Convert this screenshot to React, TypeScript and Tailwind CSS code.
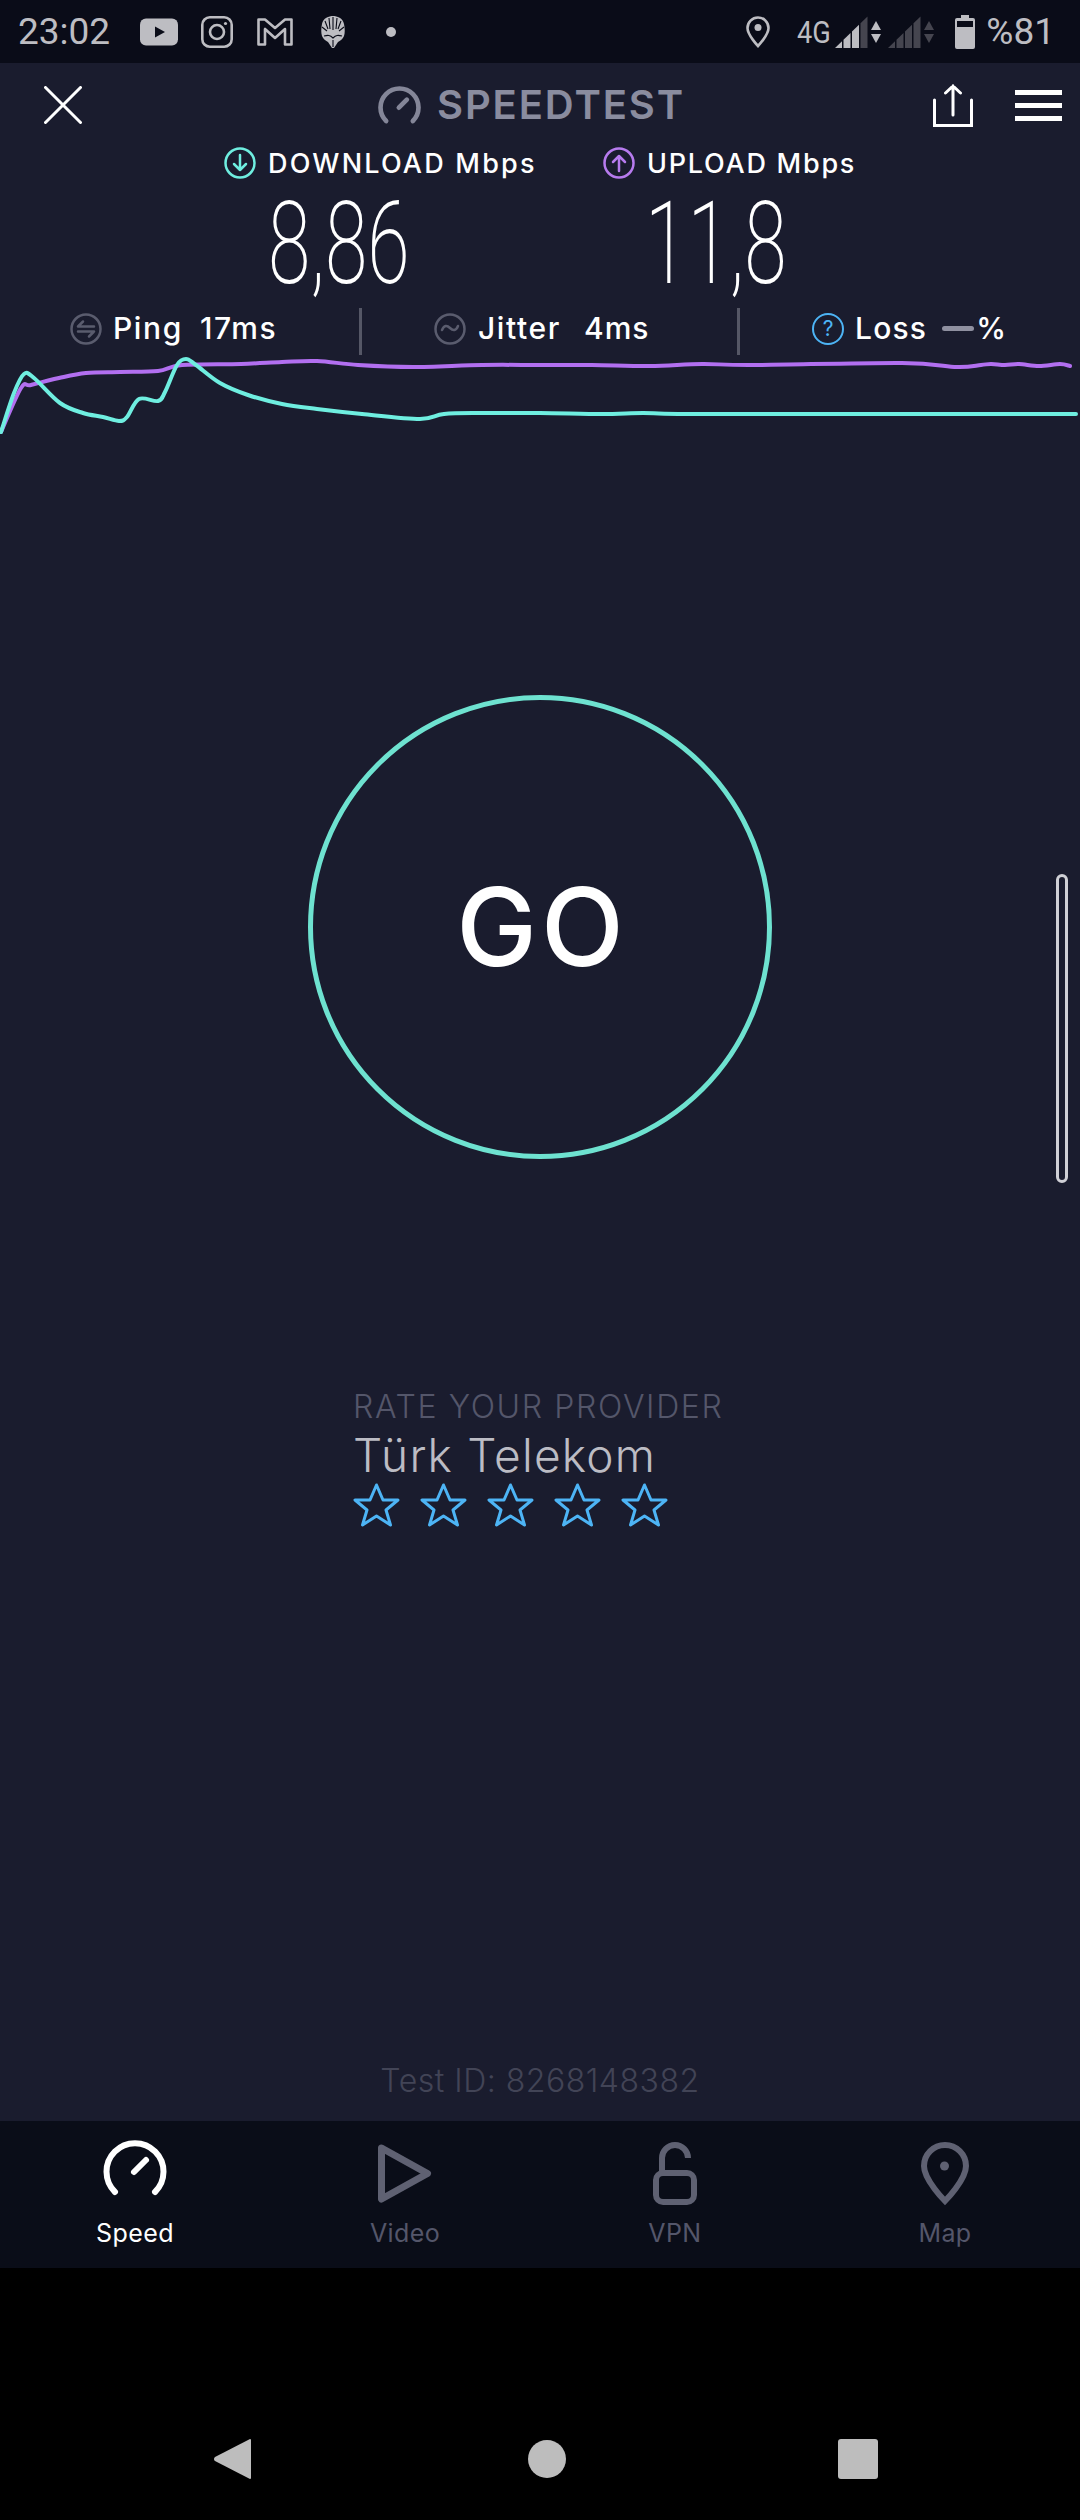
const cyanPoints = [
  [1, 432], [14, 393], [24, 374], [34, 378], [60, 403], [83, 413], [103, 417], [119, 421], [127, 417], [139, 399],
  [158, 401], [165, 392], [177, 365], [186, 359], [196, 365], [220, 383], [248, 395], [282, 404], [317, 409],
  [362, 414], [420, 419], [444, 414], [482, 413], [540, 413], [602, 414], [643, 413], [678, 414], [800, 414], [1076, 414],
];

const purplePoints = [
  [1, 432], [21, 388], [31, 385], [59, 378], [86, 373], [120, 372], [158, 371], [182, 365], [241, 364], [282, 362],
  [317, 361], [358, 365], [413, 367], [482, 365], [540, 365], [592, 365], [650, 366], [702, 364], [753, 365],
  [902, 363], [957, 367], [981, 365], [991, 364], [1005, 365], [1019, 364], [1039, 366], [1060, 364], [1070, 366],
];

// catmull-rom through the sampled points
function smoothPath(pts: number[][]) {
  let d = `M${pts[0][0]} ${pts[0][1]}`;
  for (let i = 0; i < pts.length - 1; i++) {
    const p0 = pts[i - 1] || pts[i];
    const p1 = pts[i];
    const p2 = pts[i + 1];
    const p3 = pts[i + 2] || p2;
    const c1x = p1[0] + (p2[0] - p0[0]) / 6;
    const c1y = p1[1] + (p2[1] - p0[1]) / 6;
    const c2x = p2[0] - (p3[0] - p1[0]) / 6;
    const c2y = p2[1] - (p3[1] - p1[1]) / 6;
    d += ` C${c1x} ${c1y} ${c2x} ${c2y} ${p2[0]} ${p2[1]}`;
  }
  return d;
}

function SignalBars({ lit }: { lit: number }) {
  return (
    <svg width="33" height="32" viewBox="0 0 33 32">
      {[0, 1, 2, 3].map((i) => {
        const x0 = i * 8.5;
        const x1 = x0 + 7;
        return (
          <polygon
            key={i}
            points={`${x0},32 ${x1},32 ${x1},${32 - (x1 * 32) / 33} ${x0},${32 - (x0 * 32) / 33}`}
            fill={i < lit ? "#bdbdc2" : "#45454f"}
          />
        );
      })}
    </svg>
  );
}

function DataArrows({ color }: { color: string }) {
  return (
    <svg width="10" height="22" viewBox="0 0 10 22" fill={color}>
      <polygon points="5,0 10,9 0,9" />
      <polygon points="0,13 10,13 5,22" />
    </svg>
  );
}

function StatusBar() {
  return (
    <div className="h-[63px] bg-[#0a0c18] flex items-center pl-[18px] pr-[25px] text-[#bdbdc2] font-['Roboto',sans-serif] text-[37px] leading-none">
      <span className="w-[122px]">23:02</span>
      <svg width="38" height="28" viewBox="0 0 38 28">
        <rect width="38" height="27" y="0.5" rx="6" fill="#bdbdc2" />
        <polygon points="15,8.5 25,14 15,19.5" fill="#0a0c18" />
      </svg>
      <svg className="ml-[23px]" width="32" height="32" viewBox="0 0 32 32" fill="none" stroke="#bdbdc2" strokeWidth="2.6">
        <rect x="1.3" y="1.3" width="29.4" height="29.4" rx="7.5" />
        <circle cx="16" cy="16" r="7" />
        <circle cx="24.5" cy="7.5" r="1.6" fill="#bdbdc2" stroke="none" />
      </svg>
      <svg className="ml-[24px]" width="36" height="28" viewBox="0 0 36 28" fill="none" stroke="#bdbdc2" strokeWidth="2.6" strokeLinejoin="round">
        <path d="M1.5 1.5H8L18 10 28 1.5h6.5v25H28V11L18 20 8 11v15.500H1.5Z" />
      </svg>
      <svg className="ml-[28px]" width="24" height="32" viewBox="0 0 24 32">
        <path d="M12 0C16 0 22 2 23 8c1 5 1 9 0 12-1 3-4 5-6 6l-4 6h-2l-4-6c-2-1-5-3-6-6C0 17 0 13 1 8 2 2 8 0 12 0Z" fill="#bdbdc2" />
        <path d="M12 1v13M8 2l1 11M16 2l-1 11M4 5l3 8M20 5l-3 8M1 11l5 4M23 11l-5 4M3 20c4-1 6-1 9 2 3-3 5-3 9-2M12 24v7" stroke="#0a0c18" strokeWidth="1.1" fill="none" />
      </svg>
      <span className="ml-[41px] w-[10px] h-[10px] rounded-full bg-[#bdbdc2]" />
      <svg className="ml-auto" width="24" height="32" viewBox="0 0 24 32" fill="none" stroke="#bdbdc2" strokeWidth="2.6">
        <path d="M12 30C12 30 1.500 19 1.500 12a10.500 10.500 0 0 1 21 0C22.500 19 12 30 12 30Z" />
        <circle cx="12" cy="11.5" r="3.5" fill="#bdbdc2" stroke="none" />
      </svg>
      <span className="ml-[27px] w-[38px] text-[32px] origin-left scale-x-[0.85] inline-block">4G</span>
      <SignalBars lit={3} />
      <span className="ml-[3px]"><DataArrows color="#bdbdc2" /></span>
      <span className="ml-[7px]"><SignalBars lit={0} /></span>
      <span className="ml-[3px]"><DataArrows color="#45454f" /></span>
      <svg className="ml-[21px]" width="20" height="34" viewBox="0 0 20 34">
        <path d="M6 0h8v3h4a2 2 0 0 1 2 2v27a2 2 0 0 1-2 2H2a2 2 0 0 1-2-2V5a2 2 0 0 1 2-2h4Z" fill="#bdbdc2" />
        <rect x="2" y="6" width="16" height="6" fill="#0a0c18" />
      </svg>
      <span className="ml-[11px]">%81</span>
    </div>
  );
}

function GaugeIcon({ color, stroke, className }: { color: string; stroke: number; className?: string }) {
  return (
    <svg className={className} width="70" height="60" viewBox="0 0 70 60" fill="none" stroke={color} strokeWidth={stroke} strokeLinecap="round">
      <path d="M15 54A28.5 28.5 0 1 1 55 54" />
      <path d="M34 34L46 22" />
    </svg>
  );
}

function MetricHeader({ color, up, label, tracking }: { color: string; up?: boolean; label: string; tracking: string }) {
  return (
    <div className="flex items-center h-[32px]">
      <svg width="32" height="32" viewBox="0 0 32 32" fill="none" stroke={color} strokeWidth="2.5" strokeLinecap="round" strokeLinejoin="round">
        <circle cx="16" cy="16" r="14.5" />
        {up ? <path d="M16 24V9M10 15l6-6 6 6" /> : <path d="M16 8v15M10 17l6 6 6-6" />}
      </svg>
      <span className={`ml-[12px] pt-[2px] text-[27px] font-medium text-white whitespace-nowrap ${tracking}`}>{label}</span>
    </div>
  );
}

function Stars() {
  return (
    <div className="flex gap-[20px] mt-[3px]">
      {[0, 1, 2, 3, 4].map((i) => (
        <svg key={i} width="47" height="44" viewBox="0 0 47 44" fill="none" stroke="#4db4f5" strokeWidth="3" strokeLinejoin="round">
          <polygon points="23.5,2 30,17 45,17 33,27 37.5,42 23.5,33 9.5,42 14,27 2,17 17,17" />
        </svg>
      ))}
    </div>
  );
}

function Chart() {
  return (
    <svg className="block w-[1080px] h-[85px]" viewBox="0 355 1080 85" fill="none" strokeWidth="4" strokeLinejoin="round" strokeLinecap="round">
      <path d={smoothPath(purplePoints)} stroke="#b26ff0" />
      <path d={smoothPath(cyanPoints)} stroke="#6feee0" />
    </svg>
  );
}

function NavItem({ label, active, children }: { label: string; active?: boolean; children: React.ReactNode }) {
  return (
    <div className="flex flex-col items-center">
      <div className="h-[68px] flex items-start justify-center">{children}</div>
      <span className={`mt-[12px] text-[25px] leading-[30px] tracking-[0.4px] ${active ? "text-white" : "text-[#54566a]"}`}>{label}</span>
    </div>
  );
}

export default function App() {
  return (
    <div className="w-[1080px] h-[2520px] flex flex-col bg-black font-['Inter',sans-serif] overflow-hidden">
      <StatusBar />

      <div className="relative h-[2058px] bg-[#1a1c2e] flex flex-col">
        {/* top bar */}
        <div className="h-[84px] flex items-center pl-[44px] pr-[18px]">
          <svg width="38" height="38" viewBox="0 0 38 38" stroke="white" strokeWidth="3" strokeLinecap="round">
            <path d="M1.5 1.5l35 35M36.5 1.5l-35 35" />
          </svg>
          <div className="ml-[294px] flex items-center">
            <GaugeIcon color="#848698" stroke={7} className="w-[47px] h-[40px]" />
            <span className="ml-[14px] text-[40px] font-semibold text-[#8a8c9f] tracking-[1.9px]">SPEEDTEST</span>
          </div>
          <svg className="ml-auto" width="40" height="43" viewBox="0 0 40 43" fill="none" stroke="white" strokeWidth="3" strokeLinecap="round">
            <path d="M1.5 16v25.500h37V16M20 31V2M12.500 9L20 2l7.500 7" />
          </svg>
          <div className="ml-[42px] w-[47px] flex flex-col gap-[8px]">
            <div className="h-[5px] bg-white" />
            <div className="h-[5px] bg-white" />
            <div className="h-[5px] bg-white" />
          </div>
        </div>

        {/* download / upload */}
        <div className="flex pl-[224px]">
          <div className="w-[379px]">
            <MetricHeader color="#6feee0" label="DOWNLOAD Mbps" tracking="tracking-[2.2px]" />
            <div className="h-[129px] flex items-center pl-[44px]">
              <span className="inline-block origin-left scale-x-[0.67] text-[115px] font-extralight text-white leading-none font-['Roboto',sans-serif]">8,86</span>
            </div>
          </div>
          <div>
            <MetricHeader color="#b77bee" up label="UPLOAD Mbps" tracking="tracking-[1.75px]" />
            <div className="h-[129px] flex items-center pl-[42px]">
              <span className="inline-block origin-left scale-x-[0.67] text-[115px] font-extralight text-white leading-none font-['Roboto',sans-serif]">11,8</span>
            </div>
          </div>
        </div>

        {/* ping jitter loss */}
        <div className="h-[47px] flex text-[30px] font-medium text-white tracking-[1.6px]">
          <div className="w-[359px] pb-[6px] pl-[70px] flex items-center">
            <svg width="32" height="32" viewBox="0 0 32 32" fill="none" stroke="#5a5c6e" strokeWidth="2.5" strokeLinecap="round" strokeLinejoin="round">
              <circle cx="16" cy="16" r="14.500" />
              <path d="M8 13.500h16M13 8.500l-5 5M24 18.500H8M19 23.500l5-5" />
            </svg>
            <span className="ml-[11px] w-[87px]">Ping</span>
            <span>17ms</span>
          </div>
          <div className="w-[3px] bg-[#555766]" />
          <div className="w-[375px] pb-[6px] pl-[72px] flex items-center">
            <svg width="32" height="32" viewBox="0 0 32 32" fill="none" stroke="#5a5c6e" strokeWidth="2.5" strokeLinecap="round">
              <circle cx="16" cy="16" r="14.500" />
              <path d="M8 17c2-5 5-5 8-2s6 3 8-2" />
            </svg>
            <span className="ml-[12px] w-[106px]">Jitter</span>
            <span className="tracking-[1px]">4ms</span>
          </div>
          <div className="w-[3px] bg-[#555766]" />
          <div className="pl-[72px] pb-[6px] flex items-center">
            <div className="w-[32px] h-[32px] rounded-full border-[2.5px] border-[#4db4f5] flex items-center justify-center text-[21px] font-normal tracking-normal text-[#4db4f5]">?</div>
            <span className="ml-[11px] tracking-[1.2px]">Loss</span>
            <div className="ml-[15px] w-[32px] h-[5px] rounded-full bg-[#8f90a0]" />
            <span className="ml-[2px]">%</span>
          </div>
        </div>

        <Chart />

        <div className="mt-[255px] self-center w-[464px] h-[464px] rounded-full border-[5px] border-[#6ee2d0] flex items-center justify-center">
          <span className="pl-[4px] text-[108px] font-medium text-white leading-none tracking-[4px]">GO</span>
        </div>

        <div className="mt-[228px] pl-[353px]">
          <div className="text-[32px] leading-[40px] font-light text-[#54566a] tracking-[1.65px]">RATE YOUR PROVIDER</div>
          <div className="mt-[3px] text-[46px] leading-[50px] font-light text-[#bcbcc4] tracking-[1.2px]">Türk Telekom</div>
          <Stars />
        </div>

        <div className="mt-auto pb-[20px] text-center text-[32px] leading-[40px] font-light text-[#424456] tracking-[0.5px]">Test ID: 8268148382</div>

        <div className="absolute right-[12px] top-[811px] w-[12px] h-[309px] rounded-full border-[3px] border-[#d0d0d6]" />
      </div>

      {/* bottom tabs */}
      <div className="h-[147px] bg-[#0a0d18] grid grid-cols-4 pt-[17px]">
        <NavItem label="Speed" active>
          <GaugeIcon color="white" stroke={6} />
        </NavItem>
        <NavItem label="Video">
          <svg width="70" height="68" viewBox="0 0 70 68" fill="none" stroke="#5f6172" strokeWidth="7" strokeLinejoin="round">
            <path d="M11.500 10L57.500 35.500 11.500 61Z" />
          </svg>
        </NavItem>
        <NavItem label="VPN">
          <svg width="70" height="68" viewBox="0 0 70 68" fill="none" stroke="#5f6172" strokeWidth="6">
            <rect x="16" y="35" width="38" height="29" rx="7" />
            <path d="M22 33V20A13 13 0 0 1 48 20" />
          </svg>
        </NavItem>
        <NavItem label="Map">
          <svg width="70" height="68" viewBox="0 0 70 68" fill="none" stroke="#5f6172" strokeWidth="6" strokeLinejoin="miter">
            <path d="M35 63C35 63 14 42 14 28A21 21 0 0 1 56 28C56 42 35 63 35 63Z" />
            <circle cx="34.500" cy="28" r="4.500" fill="#5f6172" stroke="none" />
          </svg>
        </NavItem>
      </div>

      {/* android nav */}
      <div className="flex-1 bg-black flex items-start pt-[170px] pl-[214px]">
        <svg width="37" height="42" viewBox="0 0 37 42" fill="#bdbdbd">
          <path d="M36 1a1 1 0 0 1 1 1v38a1 1 0 0 1-1 1L1 23a2.500 2.500 0 0 1 0-4Z" />
        </svg>
        <div className="ml-[277px] mt-[2px] w-[38px] h-[38px] rounded-full bg-[#bdbdbd]" />
        <div className="ml-[272px] mt-[1px] w-[40px] h-[40px] rounded-[3px] bg-[#bdbdbd]" />
      </div>
    </div>
  );
}
